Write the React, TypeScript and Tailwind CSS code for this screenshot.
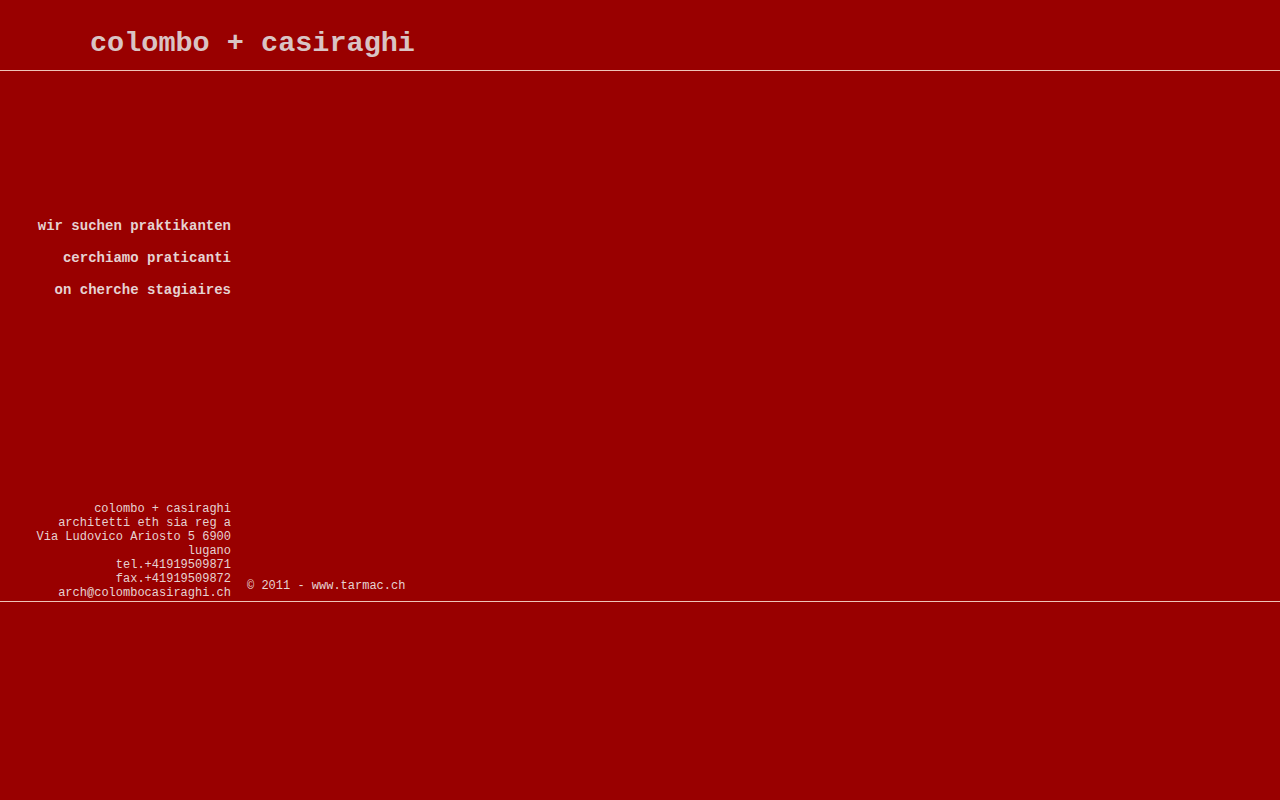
export default function App() {
  return (
    <div className="min-h-[800px] w-full bg-[#990000] font-['Liberation_Mono','Courier_New',monospace] text-[#e6d2d2]">
      <header className="h-[71px] border-b border-[#efc4b8] pl-[90px] pt-[26px]">
        <h1 className="text-[28.5px] font-bold leading-[36px] text-[#d9c4c4]">colombo + casiraghi</h1>
      </header>
      <div className="flex h-[531px] border-b border-[#efc4b8]">
        <div className="flex w-[231px] flex-col text-right">
          <div className="pt-[139px] text-[14px] font-bold leading-[32px]">
            <p>wir suchen praktikanten</p>
            <p>cerchiamo praticanti</p>
            <p>on cherche stagiaires</p>
          </div>
          <div className="mt-auto pb-[1px] text-[12px] leading-[14px]">
            <p>colombo + casiraghi</p>
            <p>architetti eth sia reg a</p>
            <p>Via Ludovico Ariosto 5 6900</p>
            <p>lugano</p>
            <p>tel.+41919509871</p>
            <p>fax.+41919509872</p>
            <p>arch@colombocasiraghi.ch</p>
          </div>
        </div>
        <div className="flex flex-col justify-end pb-[8px] pl-[16px] text-[12px] leading-[14px]">
          <p>© 2011 - www.tarmac.ch</p>
        </div>
      </div>
    </div>
  );
}
